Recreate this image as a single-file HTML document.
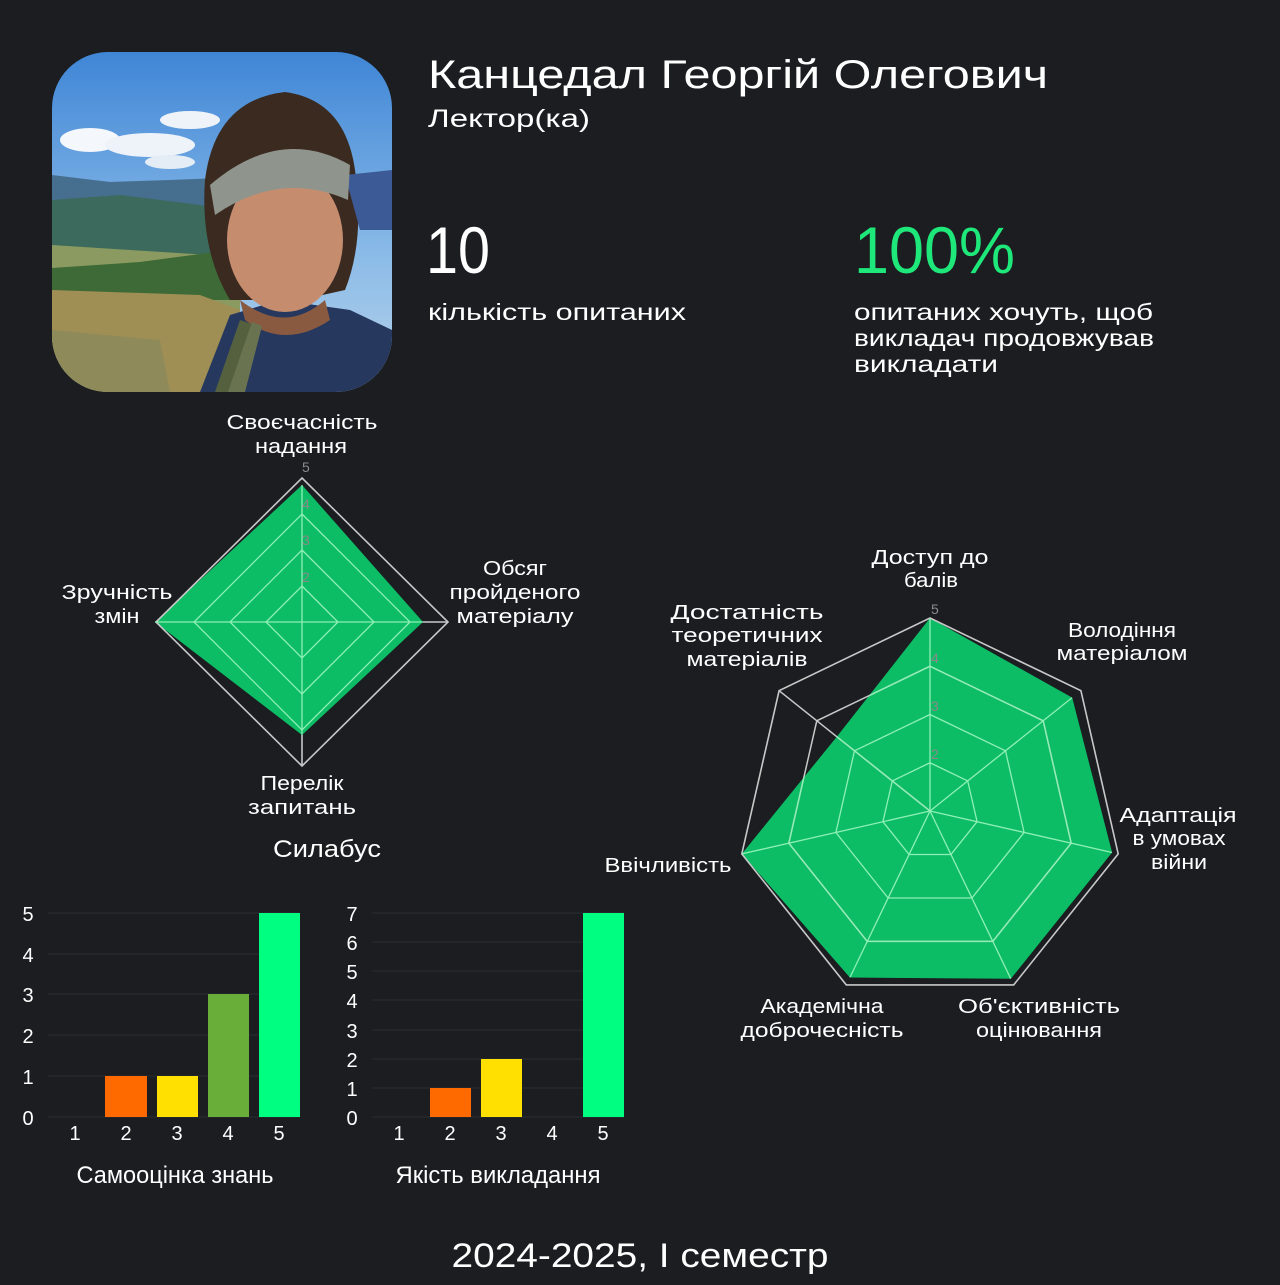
<!DOCTYPE html>
<html><head><meta charset="utf-8"><style>
html,body{margin:0;padding:0;background:#1b1d21;}
body{width:1280px;height:1280px;overflow:hidden;position:relative;font-family:"Liberation Sans","DejaVu Sans",sans-serif;color:#fff;}
svg text{font-family:"Liberation Sans","DejaVu Sans",sans-serif;}
</style></head><body>
<svg width="1280" height="1280" viewBox="0 0 1280 1280" xmlns="http://www.w3.org/2000/svg">
<defs>
<clipPath id="ph"><rect x="52" y="52" width="340" height="340" rx="56"/></clipPath>
<clipPath id="hc"><polygon points="0,-193 142.2,-113.4 182.1,41.5 80.8,167.8 -80.1,166.5 -188.2,42.9 -93.2,-74.3"/></clipPath>
<linearGradient id="sky" x1="0" y1="0" x2="0" y2="1"><stop offset="0" stop-color="#3f86d6"/><stop offset="0.6" stop-color="#8bbbe8"/><stop offset="1" stop-color="#b8d3ea"/></linearGradient>
</defs>
<g clip-path="url(#ph)">
<rect x="52" y="52" width="340" height="340" fill="url(#sky)"/>
<ellipse cx="90" cy="140" rx="30" ry="12" fill="#f4f7fb"/>
<ellipse cx="150" cy="145" rx="45" ry="12" fill="#eef3f9"/>
<ellipse cx="190" cy="120" rx="30" ry="9" fill="#eef3f9"/>
<ellipse cx="170" cy="162" rx="25" ry="7" fill="#e4edf6"/>
<path d="M52 175 L110 182 L170 180 L220 178 L240 200 L240 392 L52 392Z" fill="#466e8e"/>
<path d="M52 200 L120 195 L200 205 L240 215 L240 392 L52 392Z" fill="#3c6a5c"/>
<path d="M52 245 L130 250 L210 255 L240 260 L240 392 L52 392Z" fill="#8a9a60"/>
<path d="M52 268 L140 262 L230 250 L250 300 L52 300Z" fill="#3d6a36"/>
<path d="M52 290 L200 295 L240 310 L230 392 L52 392Z" fill="#a08f55"/>
<path d="M52 330 L160 340 L170 392 L52 392Z" fill="#8f8a5a"/>
<path d="M200 392 L230 315 L280 300 L350 310 L392 330 L392 392Z" fill="#27385e"/>
<path d="M205 180 Q215 100 285 92 Q345 100 355 170 Q365 240 345 290 L300 300 L230 300 Q200 250 205 180Z" fill="#3a2a20"/>
<path d="M345 175 L392 170 L392 230 L360 230Z" fill="#3c5a96"/>
<ellipse cx="285" cy="240" rx="58" ry="72" fill="#c58d6e"/>
<path d="M210 185 Q280 125 350 165 L348 200 Q280 170 215 215Z" fill="#8f958d"/>
<path d="M240 300 Q285 335 325 300 L330 320 Q285 350 245 320Z" fill="#8a5a40"/>
<path d="M215 392 L240 320 L255 325 L235 392Z" fill="#55603f"/>
<path d="M228 392 L252 322 L262 326 L245 392Z" fill="#6a7350"/>
</g>
<text x="428" y="88" font-size="40" fill="#fff" textLength="620" lengthAdjust="spacingAndGlyphs">Канцедал Георгій Олегович</text>
<text x="428" y="127" font-size="25" fill="#fff" textLength="162" lengthAdjust="spacingAndGlyphs">Лектор(ка)</text>
<text x="426" y="273" font-size="66" fill="#fff" textLength="64" lengthAdjust="spacingAndGlyphs">10</text>
<text x="428" y="320" font-size="23" fill="#fff" textLength="258" lengthAdjust="spacingAndGlyphs">кількість опитаних</text>
<text x="854" y="273" font-size="66" fill="#1ee87a" textLength="161" lengthAdjust="spacingAndGlyphs">100%</text>
<text x="854" y="320" font-size="23" fill="#fff" textLength="299" lengthAdjust="spacingAndGlyphs">опитаних хочуть, щоб</text>
<text x="854" y="346" font-size="23" fill="#fff" textLength="300" lengthAdjust="spacingAndGlyphs">викладач продовжував</text>
<text x="854" y="372" font-size="23" fill="#fff" textLength="144" lengthAdjust="spacingAndGlyphs">викладати</text>

<!-- diamond radar -->
<g transform="translate(302 622)">
<polygon points="0,-137 121,0 0,113 -147,0" fill="#0dbd66"/>
<g fill="none" stroke="#c8c8c8" stroke-width="1.6">
<polygon points="0,-144 146,0 0,144 -146,0"/>
</g>
<g fill="none" stroke="#8ef0b5" stroke-width="1.3">
<polygon points="0,-108 108,0 0,108 -108,0"/>
<polygon points="0,-72 72,0 0,72 -72,0"/>
<polygon points="0,-36 36,0 0,36 -36,0"/>
<line x1="0" y1="-137" x2="0" y2="113"/><line x1="-147" y1="0" x2="121" y2="0"/>
</g>
<line x1="0" y1="113" x2="0" y2="144" stroke="#c8c8c8" stroke-width="1.6"/>
<line x1="121" y1="0" x2="146" y2="0" stroke="#c8c8c8" stroke-width="1.6"/>
<g font-size="14" fill="#8a8a8a"><text x="0" y="-150">5</text><text x="0" y="-113">4</text><text x="0" y="-77">3</text><text x="0" y="-40">2</text></g>
</g>
<g font-size="20" fill="#fff" text-anchor="middle" lengthAdjust="spacingAndGlyphs">
<text x="302" y="429" textLength="151" lengthAdjust="spacingAndGlyphs">Своєчасність</text><text x="301" y="453" textLength="92" lengthAdjust="spacingAndGlyphs">надання</text>
<text x="515" y="575" textLength="64" lengthAdjust="spacingAndGlyphs">Обсяг</text><text x="515" y="599" textLength="131" lengthAdjust="spacingAndGlyphs">пройденого</text><text x="515" y="623" textLength="117" lengthAdjust="spacingAndGlyphs">матеріалу</text>
<text x="117" y="599" textLength="111" lengthAdjust="spacingAndGlyphs">Зручність</text><text x="117" y="623" textLength="45" lengthAdjust="spacingAndGlyphs">змін</text>
<text x="302" y="790" textLength="83" lengthAdjust="spacingAndGlyphs">Перелік</text><text x="302" y="814" textLength="108" lengthAdjust="spacingAndGlyphs">запитань</text>
<text x="327" y="857" font-size="24" textLength="108" lengthAdjust="spacingAndGlyphs">Силабус</text>
</g>

<!-- heptagon radar -->
<g transform="translate(930 811)">
<polygon points="0,-193 142.2,-113.4 182.1,41.5 80.8,167.8 -80.1,166.5 -188.2,42.9 -93.2,-74.3" fill="#0dbd66"/>
<polygon points="0,-193 150.9,-120.3 188.2,42.9 83.7,173.9 -83.7,173.9 -188.2,42.9 -150.9,-120.3" fill="none" stroke="#c8c8c8" stroke-width="1.6"/>
<g fill="none" stroke="#c8c8c8" stroke-width="1.5">
<polygon points="0,-144.75 113.2,-90.2 141.2,32.2 62.8,130.4 -62.8,130.4 -141.2,32.2 -113.2,-90.2"/>
<line x1="0" y1="0" x2="-150.9" y2="-120.3"/>
</g>
<g fill="none" stroke="#8ef0b5" stroke-width="1.3" clip-path="url(#hc)">
<polygon points="0,-144.75 113.2,-90.2 141.2,32.2 62.8,130.4 -62.8,130.4 -141.2,32.2 -113.2,-90.2"/>
<polygon points="0,-96.5 75.5,-60.2 94.1,21.5 41.9,87 -41.9,87 -94.1,21.5 -75.5,-60.2"/>
<polygon points="0,-48.25 37.7,-30.1 47.1,10.7 20.9,43.5 -20.9,43.5 -47.1,10.7 -37.7,-30.1"/>
<line x1="0" y1="0" x2="0" y2="-193"/><line x1="0" y1="0" x2="142.2" y2="-113.4"/><line x1="0" y1="0" x2="182.1" y2="41.5"/><line x1="0" y1="0" x2="80.8" y2="167.8"/><line x1="0" y1="0" x2="-80.1" y2="166.5"/><line x1="0" y1="0" x2="-188.2" y2="42.9"/><line x1="0" y1="0" x2="-150.9" y2="-120.3"/>
</g>
<g font-size="14" fill="#8a8a8a"><text x="1" y="-197">5</text><text x="1" y="-148">4</text><text x="1" y="-100">3</text><text x="1" y="-52">2</text></g>
</g>
<g font-size="20" fill="#fff" text-anchor="middle">
<text x="930" y="564" textLength="117" lengthAdjust="spacingAndGlyphs">Доступ до</text><text x="931" y="587" textLength="54" lengthAdjust="spacingAndGlyphs">балів</text>
<text x="1122" y="637" textLength="108" lengthAdjust="spacingAndGlyphs">Володіння</text><text x="1122" y="660" textLength="131" lengthAdjust="spacingAndGlyphs">матеріалом</text>
<text x="1178" y="822" textLength="117" lengthAdjust="spacingAndGlyphs">Адаптація</text><text x="1179" y="845" textLength="93" lengthAdjust="spacingAndGlyphs">в умовах</text><text x="1179" y="869" textLength="56" lengthAdjust="spacingAndGlyphs">війни</text>
<text x="1039" y="1013" textLength="162" lengthAdjust="spacingAndGlyphs">Об'єктивність</text><text x="1039" y="1037" textLength="126" lengthAdjust="spacingAndGlyphs">оцінювання</text>
<text x="822" y="1013" textLength="123" lengthAdjust="spacingAndGlyphs">Академічна</text><text x="822" y="1037" textLength="163" lengthAdjust="spacingAndGlyphs">доброчесність</text>
<text x="668" y="872" textLength="127" lengthAdjust="spacingAndGlyphs">Ввічливість</text>
<text x="747" y="619" textLength="153" lengthAdjust="spacingAndGlyphs">Достатність</text><text x="747" y="642" textLength="151" lengthAdjust="spacingAndGlyphs">теоретичних</text><text x="747" y="666" textLength="121" lengthAdjust="spacingAndGlyphs">матеріалів</text>
</g>

<!-- bar chart 1 -->
<g stroke="#2a2d32" stroke-width="1">
<line x1="48" y1="913" x2="300" y2="913"/><line x1="48" y1="954" x2="300" y2="954"/><line x1="48" y1="994" x2="300" y2="994"/><line x1="48" y1="1035" x2="300" y2="1035"/><line x1="48" y1="1076" x2="300" y2="1076"/><line x1="48" y1="1117" x2="300" y2="1117"/>
</g>
<rect x="105" y="1076" width="42" height="41" fill="#ff6a00"/>
<rect x="157" y="1076" width="41" height="41" fill="#ffe000"/>
<rect x="208" y="994" width="41" height="123" fill="#6aae3a"/>
<rect x="259" y="913" width="41" height="204" fill="#00ff80"/>
<g font-size="20" fill="#fff" text-anchor="middle">
<text x="28" y="921">5</text><text x="28" y="962">4</text><text x="28" y="1002">3</text><text x="28" y="1043">2</text><text x="28" y="1084">1</text><text x="28" y="1125">0</text>
<text x="75" y="1140">1</text><text x="126" y="1140">2</text><text x="177" y="1140">3</text><text x="228" y="1140">4</text><text x="279" y="1140">5</text>
<text x="175" y="1183" font-size="24" textLength="197" lengthAdjust="spacingAndGlyphs">Самооцінка знань</text>
</g>
<!-- bar chart 2 -->
<g stroke="#2a2d32" stroke-width="1">
<line x1="372" y1="913" x2="624" y2="913"/><line x1="372" y1="942" x2="624" y2="942"/><line x1="372" y1="971" x2="624" y2="971"/><line x1="372" y1="1000" x2="624" y2="1000"/><line x1="372" y1="1030" x2="624" y2="1030"/><line x1="372" y1="1059" x2="624" y2="1059"/><line x1="372" y1="1088" x2="624" y2="1088"/><line x1="372" y1="1117" x2="624" y2="1117"/>
</g>
<rect x="430" y="1088" width="41" height="29" fill="#ff6a00"/>
<rect x="481" y="1059" width="41" height="58" fill="#ffe000"/>
<rect x="583" y="913" width="41" height="204" fill="#00ff80"/>
<g font-size="20" fill="#fff" text-anchor="middle">
<text x="352" y="921">7</text><text x="352" y="950">6</text><text x="352" y="979">5</text><text x="352" y="1008">4</text><text x="352" y="1038">3</text><text x="352" y="1067">2</text><text x="352" y="1096">1</text><text x="352" y="1125">0</text>
<text x="399" y="1140">1</text><text x="450" y="1140">2</text><text x="501" y="1140">3</text><text x="552" y="1140">4</text><text x="603" y="1140">5</text>
<text x="498" y="1183" font-size="24" textLength="205" lengthAdjust="spacingAndGlyphs">Якість викладання</text>
</g>
<text x="640" y="1267" font-size="34" fill="#fff" text-anchor="middle" textLength="377" lengthAdjust="spacingAndGlyphs">2024-2025, I семестр</text>
</svg>
</body></html>
